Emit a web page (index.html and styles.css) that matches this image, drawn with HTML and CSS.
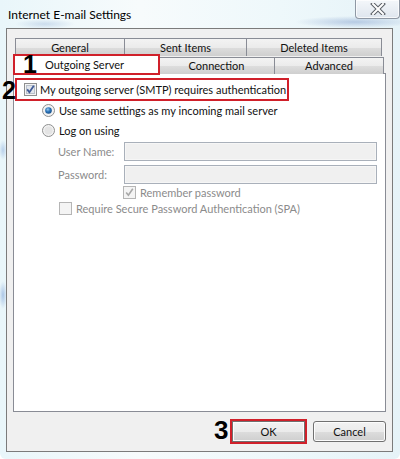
FILE: index.html
```html
<!DOCTYPE html>
<html>
<head>
<meta charset="utf-8">
<title>Internet E-mail Settings</title>
<link rel="stylesheet" href="styles.css">
</head>
<body>
<div class="window">
  <div class="titlebar">
    <span class="title">Internet E-mail Settings</span>
    <div class="close">
      <svg width="16" height="12" viewBox="0 0 16 12">
        <path d="M3 1 L13 11 M13 1 L3 11" stroke="#5a5f66" stroke-width="4" stroke-linecap="square"/>
        <path d="M3 1 L13 11 M13 1 L3 11" stroke="#ffffff" stroke-width="2" stroke-linecap="square"/>
      </svg>
    </div>
  </div>
  <div class="panel">
    <div class="tabrow row1">
      <div class="tab t-general">General</div>
      <div class="tab t-sent">Sent Items</div>
      <div class="tab t-deleted">Deleted Items</div>
    </div>
    <div class="tabrow row2">
      <div class="tab t-outgoing selected"><span class="mark mark1">1</span>Outgoing Server</div>
      <div class="tab t-connection">Connection</div>
      <div class="tab t-advanced">Advanced</div>
    </div>
    <div class="page">
      <div class="auth-row">
        <span class="mark mark2">2</span>
        <svg class="box" width="13" height="13" viewBox="0 0 13 13">
          <rect x="0.5" y="0.5" width="12" height="12" fill="#f4f4f4" stroke="#8e8f8f"/>
          <rect x="2.5" y="2.5" width="8" height="8" fill="#e2e6ec" stroke="#b9c0ca"/>
          <path d="M3.2 6.4 L5.4 9.2 L9.8 2.8" fill="none" stroke="#3f5a96" stroke-width="1.8"/>
        </svg>
        <span>My outgoing server (SMTP) requires authentication</span>
      </div>
      <div class="opt radio-row">
        <svg class="box" width="13" height="13" viewBox="0 0 13 13">
          <defs>
            <radialGradient id="dot" cx="0.4" cy="0.35" r="0.7">
              <stop offset="0" stop-color="#9ccbf0"/>
              <stop offset="0.5" stop-color="#2a73b8"/>
              <stop offset="1" stop-color="#1a4e86"/>
            </radialGradient>
          </defs>
          <circle cx="6.5" cy="6.5" r="6" fill="#f2f2f2" stroke="#8e8f8f"/>
          <circle cx="6.5" cy="6.5" r="3.3" fill="url(#dot)"/>
        </svg>
        <span>Use same settings as my incoming mail server</span>
      </div>
      <div class="opt radio-row">
        <svg class="box" width="13" height="13" viewBox="0 0 13 13">
          <circle cx="6.5" cy="6.5" r="6" fill="#f2f2f2" stroke="#8e8f8f"/>
          <circle cx="6.5" cy="6.5" r="4" fill="#e4e4e4"/>
        </svg>
        <span>Log on using</span>
      </div>
      <div class="field">
        <label class="lbl">User Name:</label>
        <div class="input"></div>
      </div>
      <div class="field">
        <label class="lbl">Password:</label>
        <div class="input"></div>
      </div>
      <div class="opt remember">
        <svg class="box" width="13" height="13" viewBox="0 0 13 13">
          <rect x="0.5" y="0.5" width="12" height="12" fill="#f4f4f4" stroke="#b5b5b5"/>
          <path d="M3.2 6.4 L5.4 9.2 L9.8 2.8" fill="none" stroke="#a8a8a8" stroke-width="1.6"/>
        </svg>
        <span class="dim">Remember password</span>
      </div>
      <div class="opt spa">
        <svg class="box" width="13" height="13" viewBox="0 0 13 13">
          <rect x="0.5" y="0.5" width="12" height="12" fill="#f4f4f4" stroke="#b5b5b5"/>
        </svg>
        <span class="dim">Require Secure Password Authentication (SPA)</span>
      </div>
    </div>
    <div class="footer">
      <div class="btn ok"><span class="mark mark3">3</span>OK</div>
      <div class="btn">Cancel</div>
    </div>
  </div>
</div>
</body>
</html>
```

FILE: styles.css
```css
* { box-sizing: border-box; }
html, body { margin: 0; padding: 0; }
body {
  width: 400px;
  height: 459px;
  overflow: hidden;
  font-family: Lato, "Noto Sans", sans-serif;
  font-size: 11px;
  color: #111;
}
.window {
  width: 400px;
  height: 459px;
  display: flex;
  flex-direction: column;
  padding: 0 7px 7px 6px;
  border-radius: 0 0 6px 6px;
  background:
    radial-gradient(ellipse 60px 6px at 355px 22px, rgba(120,150,200,0.45), rgba(120,150,200,0) 100%),
    radial-gradient(ellipse 30px 5px at 45px 24px, rgba(140,170,210,0.35), rgba(140,170,210,0) 100%),
    radial-gradient(ellipse 4px 14px at 3px 295px, rgba(110,150,210,0.5), rgba(110,150,210,0) 100%),
    radial-gradient(ellipse 4px 10px at 3px 150px, rgba(110,150,210,0.4), rgba(110,150,210,0) 100%),
    linear-gradient(90deg, #e9f6fa 0%, #f7fbfc 35%, #eef8fb 70%, #e6f3f8 100%);
}
.titlebar {
  height: 28px;
  display: flex;
  align-items: flex-start;
  justify-content: space-between;
  position: relative;
}
.title {
  margin: 7px 0 0 2px;
  font-size: 12px;
  color: #000;
}
.close {
  width: 45px;
  height: 19px;
  margin-right: -7px;
  border: 1px solid #8f98a4;
  border-top: none;
  border-radius: 0 0 4px 4px;
  background: linear-gradient(#f4f7fa, #dfe6ee);
  display: flex;
  align-items: center;
  justify-content: center;
  margin-left: auto;
  box-shadow: inset 0 0 0 1px rgba(255,255,255,0.7);
}
.panel {
  flex: 1;
  border: 1px solid #7b7b7b;
  background: #f0f0f0;
  padding: 9px 6px 0 6px;
  display: flex;
  flex-direction: column;
}
.tabrow {
  display: flex;
  height: 18px;
}
.row1 { margin-left: 2px; }
.row2 { margin-left: 1px; position: relative; z-index: 2; }
.tab {
  height: 18px;
  border: 1px solid #898c95;
  border-bottom: none;
  margin-right: -1px;
  background: linear-gradient(#f3f3f3 0%, #ebebeb 50%, #dddddd 51%, #cfcfcf 100%);
  text-align: center;
  line-height: 17px;
  position: relative;
}
.t-general { width: 110px; }
.t-sent { width: 123px; }
.t-deleted { width: 136px; }
.t-outgoing { width: 145px; }
.t-connection { width: 117px; }
.t-advanced { width: 110px; }
.tab.selected {
  background: #fff;
  height: 19px;
  margin-top: -1px;
  line-height: 18px;
  padding-right: 4px;
  z-index: 3;
  outline: 2px solid #d0202a;
  outline-offset: -1px;
  border-color: #d0202a;
}
.row2 .tab:not(.selected) { margin-top: 1px; height: 17px; line-height: 16px; }
.mark {
  position: absolute;
  font-family: "Liberation Sans", Arial, sans-serif;
  font-weight: bold;
  font-size: 25px;
  line-height: 25px;
  color: #000;
}
.mark1 { left: 8px; top: -4px; }
.mark2 { left: -15px; top: -2px; }
.mark3 { left: -19px; top: -4px; font-size: 26px; }
.page {
  height: 339px;
  margin-top: -1px;
  width: 373px;
  border: 1px solid #898c95;
  background: #fff;
  padding: 5px 0 0 3px;
}
.auth-row {
  position: relative;
  display: inline-flex;
  align-items: center;
  gap: 3px;
  height: 19px;
  padding: 0 1px 0 7px;
  outline: 2px solid #d0202a;
  outline-offset: 0;
  margin-top: 1px;
}
.box { flex: none; display: block; }
.opt {
  display: flex;
  align-items: center;
  gap: 4px;
  height: 20px;
}
.radio-row { margin-left: 25px; }
.auth-row + .radio-row { margin-top: 1px; }
.field {
  display: flex;
  align-items: center;
  height: 23px;
  margin-left: 41px;
}
.lbl {
  width: 66px;
  color: #8b8b8b;
}
.input {
  width: 253px;
  height: 19px;
  border: 1px solid #a9b0ba;
  background: #f0f0f0;
  box-shadow: inset 0 0 0 1px #f6f6f6;
}
.remember { margin-left: 106px; height: 13px; }
.spa { margin-left: 42px; height: 18px; }
.dim { color: #8b8b8b; }
.footer {
  display: flex;
  justify-content: flex-end;
  gap: 8px;
  padding-top: 9px;
}
.btn {
  width: 73px;
  height: 21px;
  border: 1px solid #707070;
  border-radius: 3px;
  background: linear-gradient(#f2f2f2 0%, #ebebeb 50%, #dddddd 51%, #cfcfcf 100%);
  box-shadow: inset 0 0 0 1px #fcfcfc;
  text-align: center;
  line-height: 19px;
  position: relative;
}
.btn.ok {
  border-radius: 0;
  outline: 2px solid #d0202a;
  outline-offset: 0;
}
```
